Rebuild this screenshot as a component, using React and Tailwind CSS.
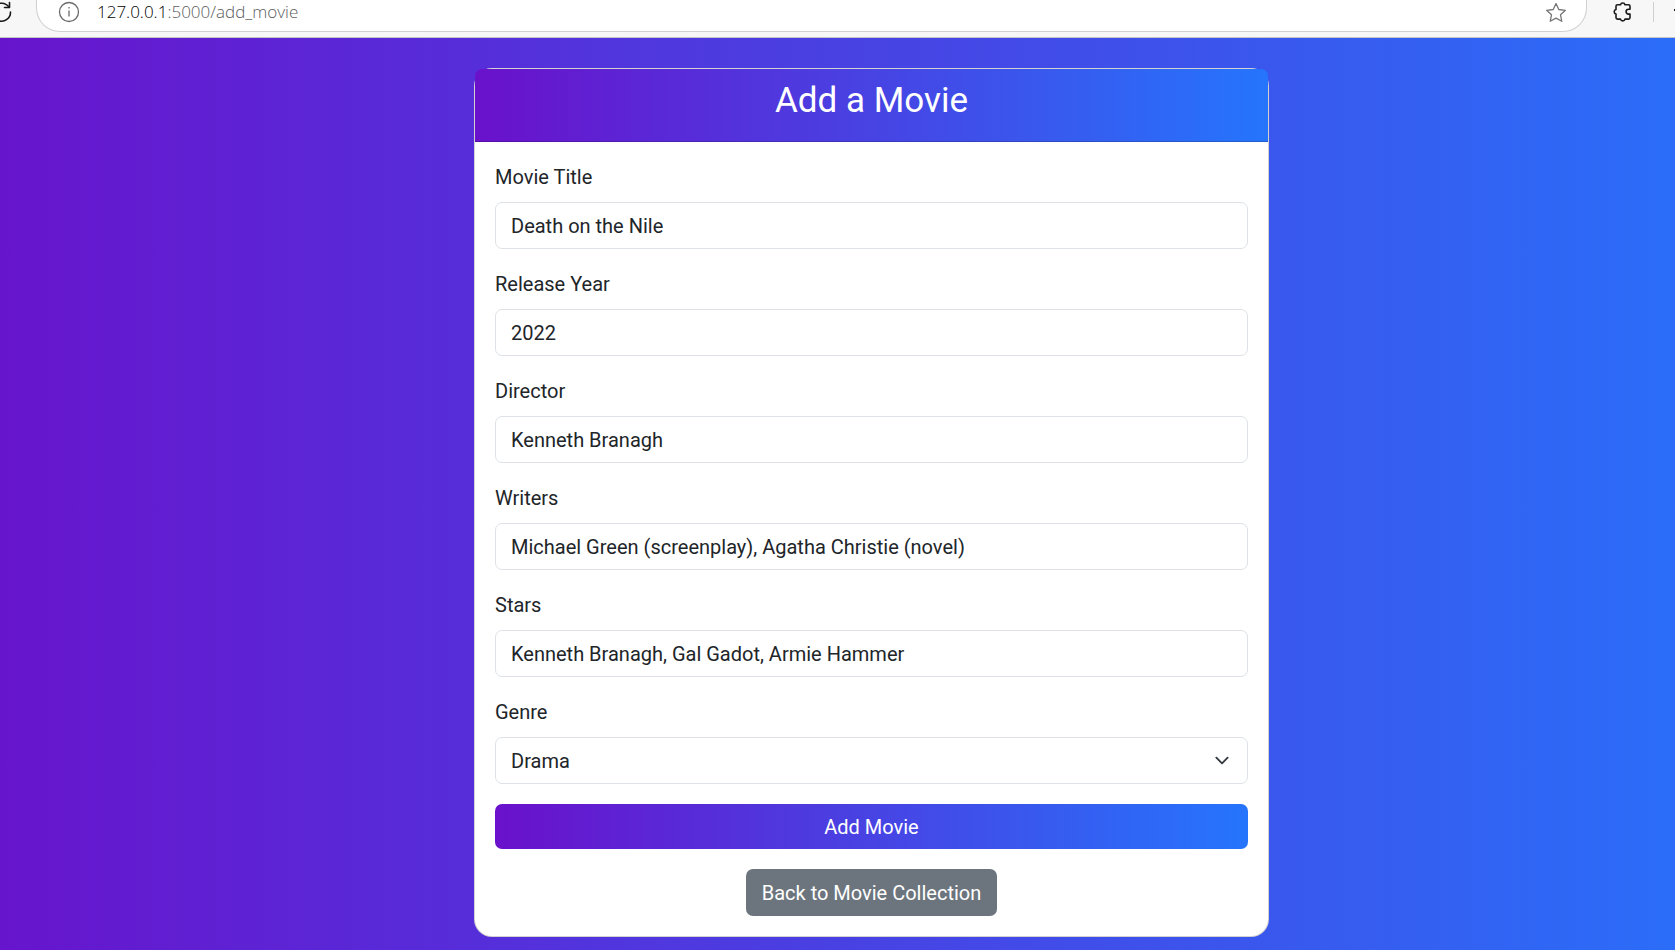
const fields = [
  { id: "title", label: "Movie Title", value: "Death on the Nile" },
  { id: "year", label: "Release Year", value: "2022" },
  { id: "director", label: "Director", value: "Kenneth Branagh" },
  { id: "writers", label: "Writers", value: "Michael Green (screenplay), Agatha Christie (novel)" },
  { id: "stars", label: "Stars", value: "Kenneth Branagh, Gal Gadot, Armie Hammer" },
];

function BrowserBar() {
  return (
    <header className="flex h-[38px] items-start overflow-hidden border-b border-[#c4c4c4] bg-[#f7f7f7]">
      <button type="button" aria-label="Refresh" className="h-6 w-9 shrink-0">
        <svg width="36" height="24" viewBox="0 0 36 24" fill="none" stroke="#1b1b1b" strokeWidth="1.6" strokeLinecap="round" strokeLinejoin="round">
          <path d="M9 7.2A9 9 0 1 0 10.5 12" />
          <path d="M9.5 2.5v5h-5" />
        </svg>
      </button>
      <div className="flex h-8 min-w-0 flex-1 items-start rounded-b-[24px] border border-t-0 border-[#d0d0d0] bg-white pr-[19px] pl-[21px]">
        <svg className="mt-px shrink-0" width="22" height="22" viewBox="0 0 22 22" fill="none" stroke="#6b6b6b" strokeWidth="1.3">
          <circle cx="11" cy="11" r="9.5" />
          <path d="M11 9.5v6M11 6v1.6" />
        </svg>
        <p className="ml-[17px] flex-1 font-['Open_Sans',sans-serif] text-[17px] leading-6 font-light text-[#5c5c5c]">
          <span className="text-black">127.0.0.1</span>:5000/add_movie
        </p>
        <button type="button" aria-label="Add to favorites" className="mt-[2px] size-[22px] shrink-0">
          <svg width="22" height="22" viewBox="0 0 22 22" fill="none" stroke="#767676" strokeWidth="1.3" strokeLinejoin="round">
            <path d="M11 1.500l2.800 6 6.600.8-4.900 4.500 1.300 6.500L11 16.100l-5.800 3.200 1.300-6.500L1.600 8.300l6.600-.8z" />
          </svg>
        </button>
      </div>
      <div className="flex w-[88px] shrink-0 items-start">
        <button type="button" aria-label="Extensions" className="mt-px ml-[25px] size-[22px]">
          <svg width="22" height="22" viewBox="0 0 22 22" fill="none" stroke="#1b1b1b" strokeWidth="1.6" strokeLinejoin="round">
            <path d="M5.500 3.800h3a2.300 2.300 0 0 1 4.500 0h3.500q1.500 0 1.500 1.500v3h-1.500a2.400 2.400 0 0 0 0 4.800h1.500v3.500q0 1.500-1.500 1.500h-3.500a2.300 2.300 0 0 1-4.500 0h-3q-1.500 0-1.500-1.500v-3.600a2.300 2.300 0 0 1 0-4.500V5.300q0-1.500 1.500-1.500z" />
          </svg>
        </button>
        <span className="mt-[2px] ml-[19px] h-5 w-[2px] bg-[#cfcfcf]" />
        <span className="mt-[9px] ml-5 h-[2px] w-1 bg-[#1b1b1b]" />
      </div>
    </header>
  );
}

export default function App() {
  return (
    <div className="flex min-h-screen flex-col font-[Roboto,sans-serif] text-xl leading-[30px] text-[#212529]">
      <BrowserBar />
      <main className="flex flex-1 items-start justify-center bg-linear-to-r/srgb from-[#6715cd] to-[#2b6df8] pt-[30px] pb-[13px] pl-[68px]">
        <section className="w-full max-w-[795px] rounded-[18px] border border-black/[0.175] bg-white">
          <div className="rounded-t-[7px] border-b border-black/[0.175] bg-linear-to-r/srgb from-[#6a11cb] to-[#2575fc] px-5 pt-[11px] pb-[19px] text-center text-white">
            <h1 className="text-[35px] leading-[42px]">Add a Movie</h1>
          </div>
          <form className="flex flex-col gap-5 p-5" onSubmit={(e) => e.preventDefault()}>
            {fields.map((f) => (
              <div key={f.id} className="flex flex-col gap-[10px]">
                <label htmlFor={f.id}>{f.label}</label>
                <input id={f.id} type="text" defaultValue={f.value} className="h-[47px] w-full rounded-[7px] border border-[#dee2e6] bg-white px-[15px]" />
              </div>
            ))}
            <div className="flex flex-col gap-[10px]">
              <label htmlFor="genre">Genre</label>
              <div className="grid items-center">
                <select id="genre" defaultValue="Drama" className="col-start-1 row-start-1 h-[47px] w-full appearance-none rounded-[7px] border border-[#dee2e6] bg-white px-[15px]">
                  <option>Drama</option>
                </select>
                <svg className="pointer-events-none col-start-1 row-start-1 mr-4 justify-self-end" width="20" height="15" viewBox="0 0 16 16" fill="none" stroke="#343a40" strokeWidth="2" strokeLinecap="round" strokeLinejoin="round">
                  <path d="m2 5 6 6 6-6" />
                </svg>
              </div>
            </div>
            <button type="submit" className="h-[45px] w-full rounded-[7px] bg-linear-to-r/srgb from-[#6a11cb] to-[#2575fc] text-white">Add Movie</button>
            <a href="/" className="self-center rounded-[7px] bg-[#6c757d] px-4 pt-[9px] pb-2 text-white">Back to Movie Collection</a>
          </form>
        </section>
      </main>
    </div>
  );
}
